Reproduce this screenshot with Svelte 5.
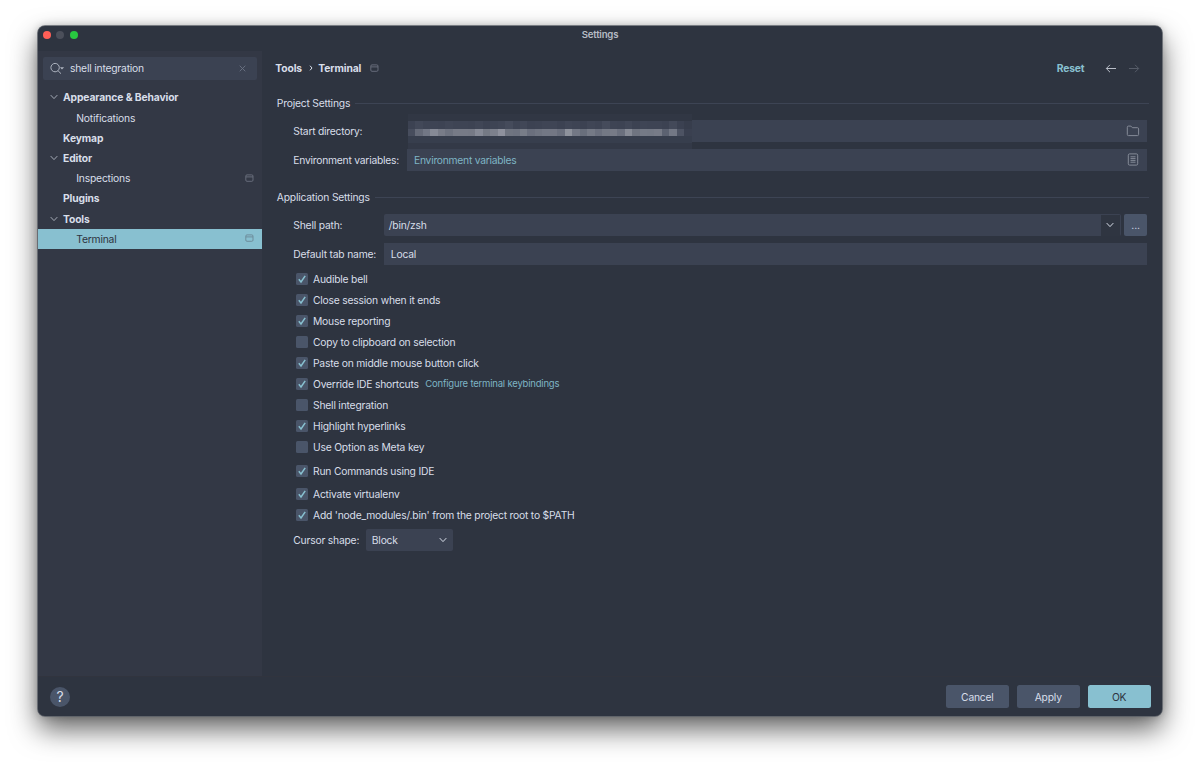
<script lang="ts">
  type Option = { label: string; checked: boolean; height?: number; link?: string };

  const tree = [
    { label: 'Appearance & Behavior', group: true, open: true },
    { label: 'Notifications' },
    { label: 'Keymap', group: true },
    { label: 'Editor', group: true, open: true },
    { label: 'Inspections', project: true },
    { label: 'Plugins', group: true },
    { label: 'Tools', group: true, open: true },
    { label: 'Terminal', project: true }
  ];

  let selected = $state('Terminal');
  let query = $state('shell integration');

  let options: Option[] = $state([
    { label: 'Audible bell', checked: true },
    { label: 'Close session when it ends', checked: true },
    { label: 'Mouse reporting', checked: true },
    { label: 'Copy to clipboard on selection', checked: false },
    { label: 'Paste on middle mouse button click', checked: true },
    { label: 'Override IDE shortcuts', checked: true, link: 'Configure terminal keybindings' },
    { label: 'Shell integration', checked: false },
    { label: 'Highlight hyperlinks', checked: true },
    { label: 'Use Option as Meta key', checked: false },
    { label: 'Run Commands using IDE', checked: true, height: 27 },
    { label: 'Activate virtualenv', checked: true, height: 20.5 },
    { label: "Add 'node_modules/.bin' from the project root to $PATH", checked: true, height: 21 }
  ]);

  // Pixelated path: one colour per block
  const blocksTop = [
    '#3c4252', '#424858', '#3e4454', '#3e4454', '#3d4353', '#404656', '#3e4454', '#3e4454', '#3d4353', '#404656',
    '#3c4252', '#3e4454', '#404656', '#454b5b', '#3e4454', '#414757', '#3c4252', '#3d4353', '#3f4555', '#3f4555',
    '#3c4252', '#404656', '#3e4454', '#3c4252', '#404656', '#3e4454', '#454b5b', '#3e4454', '#3d4353', '#414757',
    '#3c4252', '#3f4555', '#3e4454', '#3e4454', '#3c4252', '#434959', '#3b4151', '#373d4c'
  ];
  const blocksText = [
    '#474d5d', '#656a78', '#727785', '#868a96', '#787c88', '#6e7380', '#777b87', '#777b87', '#767a86', '#868a96',
    '#757a85', '#7d818d', '#8e919d', '#6f7480', '#6d727f', '#787d88', '#6a6f7d', '#6f7481', '#737885', '#737784',
    '#6a6f7d', '#8e929c', '#737885', '#696f7c', '#757a86', '#6b707e', '#747985', '#777b87', '#6b707e', '#868a95',
    '#6f7480', '#757a86', '#747985', '#777b87', '#5c6271', '#737885', '#4d5363', '#3a4050'
  ];
</script>

{#snippet chevron()}
  <svg class="chevron" width="8" height="6" viewBox="0 0 8 6"><path d="M.7 1.1 4 4.6 7.3 1.1" /></svg>
{/snippet}

{#snippet projectIcon()}
  <svg class="project-icon" width="9" height="9" viewBox="0 0 9 9">
    <rect x=".8" y=".9" width="7.2" height="6.4" rx="1.2" /><path d="M.8 2.9H8" />
  </svg>
{/snippet}

<div class="window">
  <header class="titlebar">
    <div class="lights"><i class="red"></i><i class="grey"></i><i class="green"></i></div>
    <span class="title">Settings</span>
  </header>

  <div class="body">
    <aside class="sidebar">
      <div class="search">
        <svg width="16" height="13" viewBox="0 0 16 13">
          <circle cx="5.1" cy="5.6" r="4.2" /><path d="m8.1 8.8 2.9 2.9" />
          <path class="solid" d="M9.9 5.2h4.2L12 7.5z" />
        </svg>
        <input bind:value={query} aria-label="Search settings" />
        <button class="clear" aria-label="Clear" onclick={() => (query = '')}>
          <svg width="7" height="7" viewBox="0 0 7 7"><path d="m.7.7 5.6 5.6m0-5.6L.7 6.3" /></svg>
        </button>
      </div>
      <nav class="tree">
        {#each tree as item}
          <button
            class="row"
            class:group={item.group}
            class:selected={selected === item.label}
            onclick={() => (selected = item.label)}
          >
            <span class="toggle">{#if item.open}{@render chevron()}{/if}</span>
            <span class="name">{item.label}</span>
            {#if item.project}{@render projectIcon()}{/if}
          </button>
        {/each}
      </nav>
    </aside>

    <main class="content">
      <div class="crumbs">
        <b>Tools</b>
        <svg class="sep" width="4" height="6" viewBox="0 0 4 6"><path d="M1 .7 3 3 1 5.3" /></svg>
        <b class="current">Terminal</b>
        {@render projectIcon()}
        <button class="reset">Reset</button>
        <svg class="arrow" width="12" height="10" viewBox="0 0 12 10"><path d="M11 5.5H1.4M5 1.8 1.3 5.5 5 9.2" /></svg>
        <svg class="arrow off" width="12" height="10" viewBox="0 0 12 10"><path d="M1 5.5h9.6M7 1.8l3.7 3.7L7 9.2" /></svg>
      </div>

      <h2 class="project">Project Settings</h2>
      <div class="field">
        <span class="wide">Start directory:</span>
        <div class="input">
          <div class="mosaic">
            <div class="blur-row faint"></div>
            <div class="blur-row">{#each blocksTop as c}<i style="background: {c}"></i>{/each}</div>
            <div class="blur-row">{#each blocksText as c}<i style="background: {c}"></i>{/each}</div>
            <div class="blur-row mid"></div>
            <div class="blur-row low"></div>
          </div>
          <svg class="end" width="14" height="12" viewBox="0 0 14 12">
            <path d="M1.3 2.2q0-1.1 1.1-1.1h2.5l1.5 1.6h5.1q1.1 0 1.1 1.1v5.7q0 1.1-1.1 1.1H2.4q-1.1 0-1.1-1.1z" />
          </svg>
        </div>
      </div>
      <div class="field">
        <span class="wide">Environment variables:</span>
        <div class="input env">
          <span class="value">Environment variables</span>
          <svg class="end" width="14" height="13" viewBox="0 0 14 13">
            <rect x="2.3" y=".9" width="9.4" height="11.2" rx="1.3" />
            <path d="M4.5 3.8h5M4.5 5.6h5M4.5 7.4h5M4.5 9.2h5" />
          </svg>
        </div>
      </div>

      <h2 class="application">Application Settings</h2>
      <div class="field shell">
        <span>Shell path:</span>
        <div class="combo">
          <span>/bin/zsh</span>
          <button class="drop" aria-label="Shells">{@render chevron()}</button>
        </div>
        <button class="browse">...</button>
      </div>
      <div class="field">
        <span>Default tab name:</span>
        <div class="input"><span class="value">Local</span></div>
      </div>

      <div class="options">
        {#each options as option}
          <label style="height: {option.height ?? 20.9}px">
            <input type="checkbox" bind:checked={option.checked} />
            <span class="box">
              {#if option.checked}
                <svg width="12" height="12" viewBox="0 0 12 12"><path d="M2.8 6.3 5 9 9.2 2.8" /></svg>
              {/if}
            </span>
            <span>{option.label}</span>
            {#if option.link}<a href="#keymap">{option.link}</a>{/if}
          </label>
        {/each}
      </div>

      <div class="cursor">
        <span>Cursor shape:</span>
        <button class="select"><span>Block</span>{@render chevron()}</button>
      </div>
    </main>
  </div>

  <footer class="footer">
    <button class="help">?</button>
    <div class="actions">
      <button>Cancel</button>
      <button>Apply</button>
      <button class="primary">OK</button>
    </div>
  </footer>
</div>

<style>
  :global(body) {
    background: #fff;
    overflow: hidden;
  }

  :global(#app) {
    height: 766px;
    overflow: hidden;
  }

  .window {
    width: 1124px;
    height: 690.5px;
    margin: 25.5px 0 0 38px;
    display: flex;
    flex-direction: column;
    border-radius: 7px;
    background: #2e3440;
    box-shadow:
      0 0 0 0.8px #5b6068,
      0 13px 28px rgba(0, 0, 0, 0.62),
      0 0 8px rgba(0, 0, 0, 0.22);
    color: #d8dee9;
    font: 10.3px/14px Inter, 'Liberation Sans', sans-serif;
    letter-spacing: -0.2px;
    float: left;
  }

  button,
  input {
    margin: 0;
    padding: 0;
    border: 0;
    background: none;
    color: inherit;
    font: inherit;
    letter-spacing: inherit;
    outline: none;
  }

  svg {
    display: block;
    flex-shrink: 0;
    fill: none;
    stroke: currentColor;
    stroke-width: 1;
  }

  /* Title bar */
  .titlebar {
    height: 25px;
    display: flex;
    flex-shrink: 0;
  }

  .lights {
    width: 60px;
    padding: 5.5px 0 0 5px;
    display: flex;
    gap: 5.4px;
    box-sizing: border-box;
  }

  .lights i {
    width: 8px;
    height: 8px;
    border-radius: 50%;
  }

  .red { background: #ff5f57; }
  .grey { background: #4b4f5a; }
  .green { background: #28c840; }

  .title {
    flex: 1;
    padding: 2px 60px 0 0;
    text-align: center;
    font-size: 9.6px;
    font-weight: 600;
    color: #b7bcc5;
  }

  .body {
    height: 625.5px;
    display: flex;
  }

  /* Sidebar */
  .sidebar {
    width: 224.3px;
    background: #333845;
  }

  .search {
    height: 22.7px;
    margin: 6.5px 5.3px 0 5px;
    padding: 0 11px 0 7px;
    display: flex;
    align-items: center;
    box-sizing: border-box;
    border-radius: 2px;
    background: #3b4252;
  }

  .search svg { color: #afb5c1; }
  .search .solid { fill: currentColor; stroke: none; }

  .search input {
    flex: 1;
    min-width: 0;
    margin-left: 4px;
    padding-bottom: 1px;
  }

  .search .clear svg { color: #6c7484; stroke-width: 0.9; }

  .tree {
    margin-top: 7.7px;
  }

  .row {
    width: 100%;
    height: 20.2px;
    padding: 0 8.5px 0 12px;
    display: flex;
    align-items: center;
    text-align: left;
  }

  .toggle {
    width: 13px;
    color: #a5abb6;
  }

  .name {
    flex: 1;
    padding-left: 13.3px;
  }

  .group {
    font-weight: 700;
    letter-spacing: -0.12px;
  }

  .group .name { padding-left: 0; }

  .selected {
    background: #88c0d0;
    color: #2e3440;
  }

  .project-icon {
    color: #6c7280;
    stroke-width: 0.9;
  }

  .selected .project-icon { color: #6b8996; }

  /* Settings page */
  .content {
    flex: 1;
    padding: 9.5px 14.2px 0 13px;
  }

  .crumbs {
    height: 16px;
    padding-right: 8px;
    display: flex;
    align-items: center;
    letter-spacing: -0.12px;
  }

  .sep { margin: 0 5.7px 0 6.7px; }
  .current { margin-right: 8.7px; }
  .arrow { color: #b9bec8; }
  .arrow.off { margin-left: 11px; color: #565c68; }

  .reset {
    margin: 0 20.3px 0 auto;
    color: #88c0d0;
    font-weight: 700;
  }

  h2 {
    margin: 0;
    display: flex;
    align-items: center;
    gap: 5px;
    height: 14px;
    padding-left: 1.5px;
    font: inherit;
  }

  h2::after {
    content: '';
    flex: 1;
    height: 1px;
    margin-right: -0.7px;
    background: #3d4454;
  }

  .project { margin: 20px 0 9.5px; }
  .application { margin: 19.3px 0 9.5px; }

  .field {
    height: 22.5px;
    margin: 0 0 6.5px 18px;
    display: flex;
    align-items: center;
  }

  .field > span {
    width: 91px;
    flex-shrink: 0;
  }

  .field > .wide {
    width: 113.7px;
    letter-spacing: -0.23px;
  }

  .input {
    position: relative;
    flex: 1;
    height: 100%;
    margin-right: 0.9px;
    padding: 0 6.5px;
    display: flex;
    align-items: center;
    background: #3b4252;
  }

  .env {
    padding-left: 7px;
    color: #7fb5c5;
    letter-spacing: -0.25px;
  }

  .end {
    margin-left: auto;
    color: #858b98;
  }

  /* Hidden part of the path, spills a little over the field */
  .mosaic {
    position: absolute;
    left: 1px;
    top: -5.6px;
    width: 284px;
  }

  /* Gap left of the blocks, where the field edge is covered too */
  .mosaic::before {
    content: '';
    position: absolute;
    left: -1px;
    top: 0;
    width: 1px;
    height: 100%;
    background: #2e3440;
  }

  .blur-row {
    height: 7.3px;
    display: flex;
  }

  .blur-row i { flex: 1; }
  .faint { background: #313744; }
  .mid { background: #373e4d; }
  .low { height: 6px; background: #333947; }

  .combo {
    flex: 1;
    height: 100%;
    display: flex;
    align-items: center;
    justify-content: space-between;
    padding-left: 4.5px;
    border-radius: 2px;
    background: #3b4252;
  }

  .drop {
    width: 18.5px;
    height: 21px;
    margin-right: 1px;
    display: grid;
    place-items: center;
    background: #2f3541;
  }

  .browse {
    width: 22.8px;
    height: 100%;
    margin: 0 0.9px 0 3.5px;
    border-radius: 2px;
    background: #4a5569;
  }

  /* Sits closer to the fields than they do to each other */
  .options {
    margin: -2.8px 0 0 20.7px;
  }

  .options label {
    display: flex;
    align-items: center;
  }

  .options input {
    position: absolute;
    opacity: 0;
  }

  .box {
    width: 12px;
    height: 12px;
    margin-right: 5px;
    border-radius: 1.5px;
    background: #4a5569;
    color: #88c0d0;
  }

  .box svg { stroke-width: 1.5; }

  .options a {
    margin-left: 6.5px;
    font-size: 9.5px;
    color: #7fb5c5;
    text-decoration: none;
  }

  .cursor {
    margin: 3px 0 0 18px;
    display: flex;
    align-items: center;
  }

  .cursor > span { width: 73px; }

  .select {
    width: 87px;
    height: 22.5px;
    padding: 0 6.5px 0 5.5px;
    display: flex;
    align-items: center;
    justify-content: space-between;
    border-radius: 2px;
    background: #3b4252;
  }

  /* Footer */
  .footer {
    flex: 1;
    padding: 0.5px 11.3px 0 12px;
    display: flex;
    align-items: center;
    justify-content: space-between;
    border-top: 1px solid #31343e;
  }

  .help {
    width: 20px;
    height: 20px;
    border-radius: 50%;
    background: #4a5569;
    font-size: 14px;
  }

  .actions {
    display: flex;
    gap: 7.7px;
  }

  .actions button {
    width: 63.2px;
    height: 23px;
    border-radius: 2.5px;
    background: #4a5569;
  }

  .actions .primary {
    background: #88c0d0;
    color: #2e3440;
  }
</style>
